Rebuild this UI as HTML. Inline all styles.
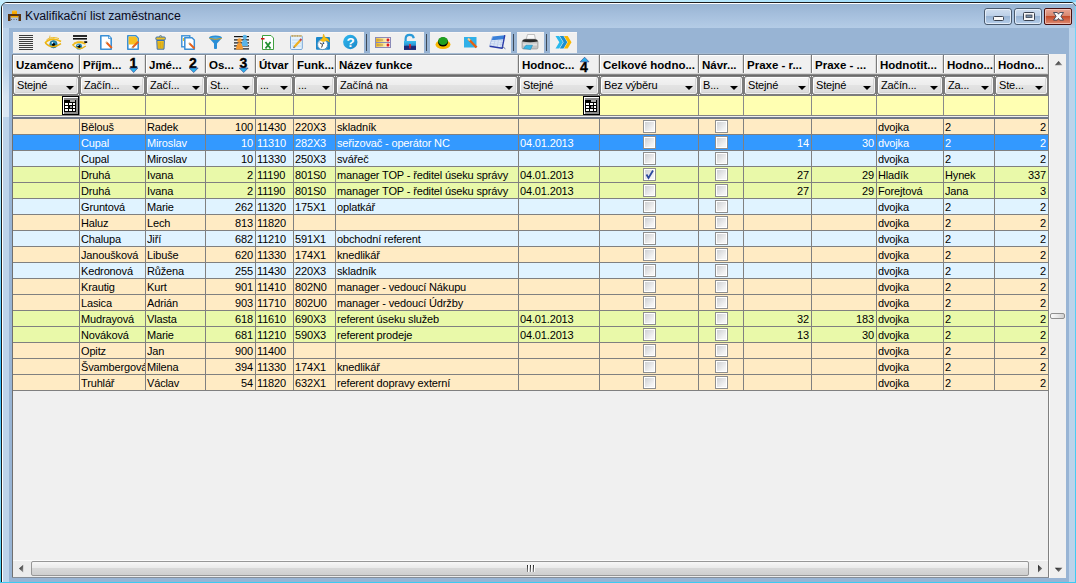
<!DOCTYPE html><html><head><meta charset="utf-8"><style>
*{margin:0;padding:0;box-sizing:border-box}
html,body{width:1076px;height:583px;overflow:hidden;background:linear-gradient(#c0eefe 0,#a0e4ff 35%,#30b8f8 65%,#90e0ff 85%,#3ccaf2 100%);font-family:"Liberation Sans",sans-serif}
.a{position:absolute}
.t{position:absolute;white-space:nowrap;font-size:11px;line-height:14px;color:#000;letter-spacing:-0.15px}
.hb{font-weight:bold;font-size:11.5px;top:58px;letter-spacing:0}
.r{text-align:right}
.cb{position:absolute;width:13px;height:13px;border:1px solid #8e8f8f;background:#fff;padding:1px}
.cb i{display:block;width:9px;height:9px;background:linear-gradient(135deg,#cfd1d4,#f4f4f4 80%)}
.fb{position:absolute;border:1px solid #fff;border-right-color:#f4f4f4;border-bottom-color:#f0f0f0;border-radius:2px;box-shadow:inset -1px -1px 0 #d4d4d4;background:linear-gradient(#f3f3f3 0,#ededed 45%,#e3e3e3 50%,#dcdcdc 100%)}
.arr{position:absolute;width:0;height:0;border-left:4px solid transparent;border-right:4px solid transparent;border-top:4px solid #000}
.vl{position:absolute;width:1px;background:#808080}
.hl{position:absolute;height:1px;background:#808080}
</style></head><body>
<div class="a" style="left:0;top:0;width:1076px;height:2px;background:linear-gradient(90deg,#c8ecfc,#c0ecfc 60%,#88d0f8)"></div>
<div class="a" style="left:1px;top:2px;width:1075px;height:581px;border:1px solid #1c1c1c;border-radius:6px 5px 0 0;background:#bcd3ea;overflow:hidden">
 <div class="a" style="left:0;top:0;width:100%;height:1px;background:#fff"></div>
 <div class="a" style="left:0;top:0;width:1px;height:100%;background:#fff"></div>
 <div class="a" style="left:1px;top:1px;width:100%;height:24px;background:linear-gradient(#98b4d2,#a4bedc 40%,#b4cce6 100%)"></div>
</div>
<div class="a" style="left:1075px;top:6px;width:1px;height:577px;background:linear-gradient(#70d4f8,#3ccaf2)"></div>
<div class="a" style="left:0;top:582px;width:1076px;height:1px;background:#3ccaf2"></div>

<div class="a" style="left:3px;top:66px;width:6px;height:51px;background:linear-gradient(rgba(255,255,255,0),rgba(255,255,255,0.4) 60%,rgba(255,255,255,0.45))"></div>
<div class="t" style="left:25px;top:8px;font-size:12.3px;line-height:16px;color:#0a0a20;letter-spacing:-0.05px">Kvalifikační list zaměstnance</div>
<div class="a" style="left:9px;top:28px;width:1060px;height:554px;background:#98b4d4"></div>
<div class="a" style="left:13px;top:32px;width:351px;height:21px;background:#f0f0f0;border-top:1px solid #f8f6f6"></div>
<div class="a" style="left:370px;top:32px;width:54px;height:21px;background:#f0f0f0;border-top:1px solid #f8f6f6"></div>
<div class="a" style="left:430px;top:32px;width:81px;height:21px;background:#f0f0f0;border-top:1px solid #f8f6f6"></div>
<div class="a" style="left:517px;top:32px;width:27px;height:21px;background:#f0f0f0;border-top:1px solid #f8f6f6"></div>
<div class="a" style="left:550px;top:32px;width:27px;height:21px;background:#f0f0f0;border-top:1px solid #f8f6f6"></div>
<div class="a" style="left:366px;top:34px;width:1px;height:17px;background:#3e4a58"></div>
<div class="a" style="left:426px;top:34px;width:1px;height:17px;background:#3e4a58"></div>
<div class="a" style="left:513px;top:34px;width:1px;height:17px;background:#3e4a58"></div>
<div class="a" style="left:546px;top:34px;width:1px;height:17px;background:#3e4a58"></div>

<svg class="a" style="left:0;top:0" width="1076" height="60" viewBox="0 0 1076 60">
<!-- title desk icon -->
<rect x="12" y="11" width="5" height="3" fill="#f5a800"/>
<rect x="12.5" y="10.5" width="4" height="1" fill="#ffc030"/>
<rect x="8" y="14" width="13" height="2" fill="#5a3410"/>
<rect x="8" y="16" width="2.5" height="5" fill="#5a3410"/>
<rect x="18.5" y="16" width="2.5" height="5" fill="#5a3410"/>
<rect x="11" y="16" width="7" height="1.5" fill="#f5a800"/>
<rect x="11" y="19" width="1" height="1" fill="#667"/><rect x="13.5" y="19" width="1" height="1" fill="#667"/><rect x="16" y="19" width="1" height="1" fill="#667"/>

<!-- 1 lines -->
<g fill="#3c3c3c"><rect x="19" y="35" width="14" height="1"/><rect x="19" y="37" width="14" height="1"/><rect x="19" y="39" width="14" height="1"/><rect x="19" y="41" width="14" height="1"/><rect x="19" y="43" width="14" height="1"/><rect x="19" y="45" width="14" height="1"/><rect x="19" y="47" width="14" height="1"/><rect x="19" y="49" width="14" height="1"/></g>

<!-- 2 eye -->
<circle cx="53.5" cy="44.2" r="3.7" fill="#2a8cb4"/><circle cx="53.5" cy="44.2" r="3.7" fill="none" stroke="#18607e" stroke-width="0.6"/>
<circle cx="53.6" cy="44.6" r="1.7" fill="#000"/><circle cx="52.4" cy="42.9" r="0.8" fill="#fff"/>
<path d="M45 43 Q51.5 36 61 41.5" fill="none" stroke="#f0b810" stroke-width="1.7"/>
<path d="M46.5 39.8 Q52 35.8 59 38.6" fill="none" stroke="#ecbc30" stroke-width="1"/>
<path d="M49.5 38.5 L50 35.5" stroke="#e0b030" stroke-width="0.8"/>
<path d="M45.3 43 Q52 50 61 43.6" fill="none" stroke="#e8b010" stroke-width="1.3"/>

<!-- 3 eye with lines -->
<rect x="73" y="35" width="14" height="2" fill="#2a2a2a"/><rect x="73" y="38" width="14" height="1.6" fill="#111"/>
<rect x="84.2" y="41.2" width="3" height="1.8" fill="#111"/>
<circle cx="79" cy="46.5" r="3.1" fill="#2a8cb4"/><circle cx="79" cy="46.6" r="1.5" fill="#000"/><circle cx="78" cy="45.4" r="0.7" fill="#fff"/>
<path d="M72.5 45 Q78 40 85.5 44" fill="none" stroke="#f0b810" stroke-width="1.5"/>
<path d="M73.8 43 Q78.5 40 84 42" fill="none" stroke="#ecbc30" stroke-width="0.9"/>
<path d="M72.7 45.2 Q79 51.5 85.8 46" fill="none" stroke="#e8b010" stroke-width="1.2"/>

<!-- 4 doc -->
<path d="M100.8 35.8 H108.8 L111.2 38.2 V49.2 H100.8Z" fill="#fff" stroke="#3a8fd6" stroke-width="1.6" stroke-linejoin="round"/>
<path d="M108.5 35.8 V38.5 H111.2" fill="#d8ecfa" stroke="#3a8fd6" stroke-width="0.8"/>
<path d="M106.5 42.5 L111.8 48" stroke="#e8601a" stroke-width="2"/>
<path d="M105.8 41.8 L107 43" stroke="#d8b080" stroke-width="1.6"/>

<!-- 5 doc yellow -->
<path d="M127.8 35.8 H135.8 L138.2 38.2 V49.2 H127.8Z" fill="#fff" stroke="#3a8fd6" stroke-width="1.6" stroke-linejoin="round"/>
<path d="M128.6 36.6 H135.5 L137.4 38.6 V44.5 H128.6Z" fill="#f8c020"/>
<path d="M132.5 47.5 L138.4 41.6" stroke="#e8601a" stroke-width="2"/>
<path d="M131.8 48.2 L133 47" stroke="#c8a070" stroke-width="1.4"/>

<!-- 6 trash -->
<rect x="155.8" y="37" width="9.6" height="3" rx="1.2" fill="#f0c020" stroke="#3a70b0" stroke-width="1"/>
<path d="M159 36.6 Q160.6 34.6 162.2 36.6" fill="#f0c020" stroke="#3a70b0" stroke-width="0.9"/>
<path d="M156.8 40.5 H164.4 L164 49.2 H157.2Z" fill="#f0c020" stroke="#3a70b0" stroke-width="1"/>
<path d="M159 42 V48 M160.6 42 V48 M162.2 42 V48" stroke="#c89a10" stroke-width="0.6"/>

<!-- 7 doc copy -->
<rect x="181.8" y="35.8" width="8" height="11" fill="#fff" stroke="#3a8fd6" stroke-width="1.4"/>
<rect x="183" y="38" width="1" height="3" fill="#f0c020"/>
<path d="M184.8 37.8 H192 L194.3 40 V49.2 H184.8Z" fill="#fff" stroke="#3a8fd6" stroke-width="1.5" stroke-linejoin="round"/>
<path d="M189.5 43.5 L194.5 48.5" stroke="#e8601a" stroke-width="2"/>
<path d="M188.8 42.8 L190 44" stroke="#c8a070" stroke-width="1.4"/>

<!-- 8 funnel -->
<path d="M209 38 Q209 35.5 215.5 35.5 Q222 35.5 222 38 L217 43.5 V48.5 Q215.5 49.5 214 48.5 V43.5Z" fill="#2a8ed6"/>
<path d="M210.5 38 Q215.5 36.6 220.5 38 Q215.5 39.4 210.5 38Z" fill="#5ab8ec"/>
<path d="M209.4 38.4 Q215.5 40.4 221.6 38.4" stroke="#d8a020" stroke-width="1" fill="none"/>

<!-- 9 people lines -->
<g fill="#111"><rect x="234" y="36" width="15" height="1.2"/><rect x="234" y="39.3" width="15" height="1.2"/><rect x="234" y="42.3" width="15" height="1.2"/><rect x="234" y="45.3" width="15" height="1.2"/><rect x="234" y="48.3" width="15" height="1.2"/></g>
<circle cx="244.8" cy="37" r="2.2" fill="#5ab4e8"/><path d="M241.5 46 Q242 39.5 244.8 39 Q247.6 39.5 248 46Z" fill="#5ab4e8"/>
<circle cx="239.5" cy="40.5" r="2.2" fill="#f59a30"/><path d="M236 49.5 Q236.5 43 239.5 42.5 Q242.5 43 243 49.5Z" fill="#f59a30"/>

<!-- 10 excel -->
<path d="M262.5 35.5 H271 L273.5 38 V49.5 H262.5Z" fill="#fff" stroke="#40a040" stroke-width="1"/>
<rect x="261" y="38" width="3.5" height="1.5" fill="#d01010"/>
<path d="M265.5 42 L270.5 48.5 M270.5 42 L265.5 48.5" stroke="#209030" stroke-width="1.8"/>

<!-- 11 notepad -->
<rect x="290.5" y="35.5" width="11.8" height="14" rx="1.2" fill="#e4f2fc" stroke="#7aa8d8"/>
<rect x="291" y="35" width="11" height="1.8" fill="#d0c090"/>
<path d="M292.5 35.5 V36.5 M295 35.5 V36.5 M297.5 35.5 V36.5 M300 35.5 V36.5" stroke="#a07840" stroke-width="0.8"/>
<path d="M292 40 H301 M292 43 H301 M292 46 H301" stroke="#b8d4f0" stroke-width="0.8"/>
<path d="M294.2 47 L300.2 40.4" stroke="#f0b020" stroke-width="2.2"/>
<path d="M300 40.6 L301.4 39" stroke="#c04040" stroke-width="2"/>
<path d="M293.6 47.8 L294.4 46.8" stroke="#555" stroke-width="1.2"/>

<!-- 12 clock -->
<rect x="316" y="37" width="14" height="12.8" rx="1" fill="#1a88cc"/>
<circle cx="322.6" cy="44.4" r="5.3" fill="#fff"/>
<circle cx="322.6" cy="44.6" r="5" fill="none" stroke="#0a5a90" stroke-width="0.6"/>
<path d="M322.6 44.6 L319.8 42.8 M322.6 44.6 L321.6 47.5" stroke="#222" stroke-width="0.9"/><circle cx="323.4" cy="43.2" r="0.9" fill="#1a4a80"/>
<path d="M323.5 34 L325.2 37.4 Q328.5 38 329.6 42 L326.4 40.4 L323.4 41.8 L320.2 40.6 Q321.5 38.6 322.6 38Z" fill="#f8c010" stroke="#d8a000" stroke-width="0.4" stroke-linejoin="round"/>

<!-- 13 help -->
<defs><linearGradient id="hg" x1="0" y1="0" x2="1" y2="1"><stop offset="0" stop-color="#30b8f0"/><stop offset="1" stop-color="#1a88c8"/></linearGradient>
<linearGradient id="lg" x1="0" y1="0" x2="1" y2="0"><stop offset="0" stop-color="#e8b020"/><stop offset="0.6" stop-color="#f8e8a0"/><stop offset="1" stop-color="#ffffff"/></linearGradient>
<linearGradient id="kg" x1="0" y1="0" x2="0" y2="1"><stop offset="0" stop-color="#38c0f0"/><stop offset="0.5" stop-color="#2a90d0"/><stop offset="0.55" stop-color="#22307a"/><stop offset="1" stop-color="#1a2a78"/></linearGradient></defs>
<circle cx="350.3" cy="42" r="7.2" fill="url(#hg)"/>
<text x="350.5" y="47.2" font-family="Liberation Sans" font-weight="bold" font-size="13.5" fill="#fff" text-anchor="middle">?</text>

<!-- 14 list x -->
<rect x="375.5" y="37.5" width="15" height="10" fill="#f0f0f8" stroke="#8a8ab8" stroke-width="1"/>
<rect x="376" y="38.2" width="14" height="3.8" fill="url(#lg)"/><rect x="376" y="43" width="14" height="3.8" fill="url(#lg)"/>
<path d="M375.5 42.5 H390.5" stroke="#8a8ab8"/>
<path d="M377 40 H383 M377 45 H383" stroke="#a08030" stroke-width="0.7"/>
<path d="M386.8 38.8 L389.2 41.2 M389.2 38.8 L386.8 41.2 M386.8 43.8 L389.2 46.2 M389.2 43.8 L386.8 46.2" stroke="#e01818" stroke-width="1.3"/>

<!-- 15 lock -->
<path d="M405.6 41.5 V39 Q405.6 34.8 409.6 34.8 Q413.2 34.8 413.8 38.2" fill="none" stroke="#2a9ad8" stroke-width="2.2"/>
<path d="M404 41 H416 V49.8 H404Z" fill="url(#kg)"/>
<path d="M404 46.5 Q407 45 410 46.5 Q413 48 416 46.5 V49.8 H404Z" fill="#1a2a78"/>
<circle cx="410" cy="45" r="1.1" fill="#e02020"/><rect x="409.3" y="45" width="1.4" height="3.5" fill="#e02020"/>

<!-- 16 green button -->
<ellipse cx="443" cy="44.5" rx="7.5" ry="4.5" fill="#f8b800"/>
<ellipse cx="443" cy="42" rx="5" ry="4.5" fill="#000"/>
<ellipse cx="443" cy="41" rx="4.8" ry="4" fill="#20a020"/>

<!-- 17 pencil blue -->
<rect x="464" y="37" width="12.5" height="10.5" fill="#30b0e8"/>
<path d="M469 39.5 L476.5 47.5" stroke="#e86010" stroke-width="2.5"/>
<path d="M468 38.5 L470 40.5" stroke="#f8d090" stroke-width="2"/>

<!-- 18 calendar tilted -->
<path d="M492.5 36.5 L504.8 35.2 L502.2 48.2 L489.6 46.2 Z" fill="#e6eefa"/>
<path d="M492.5 36.5 L504.8 35.2 L504 39.2 L491.4 40.2Z" fill="#3a80d8"/>
<path d="M491 41.5 L503.6 40.5 M490.5 43.5 L503.2 42.6 M490 45.2 L502.8 44.6 M495 40 L493.5 46.8 M498.5 39.8 L497.2 47.4 M501.5 39.4 L500.5 47.8" stroke="#b0c4e8" stroke-width="0.6"/>
<path d="M504.8 35.2 L502.2 48.2 L489.6 46.2" fill="none" stroke="#2a3aa8" stroke-width="1.4" stroke-linejoin="round"/>
<path d="M492.5 36.5 L489.6 46.2" stroke="#9ab0e0" stroke-width="0.8"/>
<path d="M502.6 46.5 L505.4 48.8" stroke="#6070a0" stroke-width="1"/>

<!-- 19 printer -->
<path d="M526 40 L527.5 34.5 H534.5 L535.5 40Z" fill="#fafafa" stroke="#a8a8a8" stroke-width="0.7"/>
<path d="M522 42 Q522 39.5 525 39.2 H535 Q538 39.5 538 42 V47.5 Q538 49 536.5 49 H523.5 Q522 49 522 47.5Z" fill="#c4c4c4" stroke="#8a8a8a" stroke-width="0.6"/>
<path d="M522.2 41.5 Q522.5 39.4 525 39.2 H535 Q537.6 39.4 537.8 41.5 Q530 43 522.2 41.5Z" fill="#2a2a2a"/>
<rect x="523" y="43.5" width="14" height="2" fill="#e0e0e0"/>
<path d="M523.5 48.5 L526 45.2 L532.5 45.2 L530.5 49.6 Z" fill="#38b8e8" stroke="#1a80b0" stroke-width="0.5"/>

<!-- 20 arrows -->
<path d="M555.5 36 H559.2 L563 42.2 L559.2 48.5 H555.5 L559.3 42.2Z" fill="#28b8ec"/>
<path d="M559.8 36 H563.5 L567.3 42.2 L563.5 48.5 H559.8 L563.6 42.2Z" fill="#1a8ed0"/>
<path d="M564 36 H567.7 L571.5 42.2 L567.7 48.5 H564 L567.8 42.2Z" fill="#f8b800"/>

<!-- window buttons -->
<defs>
<linearGradient id="gb" x1="0" y1="0" x2="0" y2="1"><stop offset="0" stop-color="#d2e0f0"/><stop offset="0.45" stop-color="#bcd0e8"/><stop offset="0.5" stop-color="#98b4d4"/><stop offset="1" stop-color="#b8d0ec"/></linearGradient>
<linearGradient id="gr" x1="0" y1="0" x2="0" y2="1"><stop offset="0" stop-color="#eaa898"/><stop offset="0.45" stop-color="#d88870"/><stop offset="0.5" stop-color="#c44a28"/><stop offset="1" stop-color="#e0907a"/></linearGradient>
</defs>
<rect x="984.5" y="8.5" width="27" height="16" rx="2.5" fill="url(#gb)" stroke="#4a5a6e"/>
<rect x="985.5" y="9.5" width="25" height="14" rx="2" fill="none" stroke="#eef4fb" stroke-opacity="0.8"/>
<rect x="993.5" y="16.5" width="10" height="4" rx="1" fill="#f8f8f8" stroke="#3a4250" stroke-width="1"/>
<rect x="1014.5" y="8.5" width="27" height="16" rx="2.5" fill="url(#gb)" stroke="#4a5a6e"/>
<rect x="1015.5" y="9.5" width="25" height="14" rx="2" fill="none" stroke="#eef4fb" stroke-opacity="0.8"/>
<rect x="1023.5" y="12.5" width="11" height="8" rx="1" fill="#f8f8f8" stroke="#3a4250" stroke-width="1"/>
<rect x="1026" y="15" width="6" height="2.5" fill="#7a90a8" stroke="#3a4250" stroke-width="0.8"/>
<rect x="1044.5" y="8.5" width="27" height="16" rx="1.5" fill="url(#gr)" stroke="#4a1010"/>
<rect x="1045.5" y="9.5" width="25" height="14" rx="1" fill="none" stroke="#f8d0c8" stroke-opacity="0.7"/>
<path d="M1053.5 12.5 L1057.3 12.5 L1058.5 14.2 L1059.7 12.5 L1063.5 12.5 L1060.9 16.3 L1063.5 20.1 L1059.7 20.1 L1058.5 18.4 L1057.3 20.1 L1053.5 20.1 L1056.1 16.3Z" fill="#f8f8f8" stroke="#3a4252" stroke-width="0.9" stroke-linejoin="round"/>
</svg>

<div class="hl" style="left:12px;top:53px;width:1037px;background:#a6bcd4"></div>
<div class="hl" style="left:12px;top:54px;width:1037px;background:#7e8c9c"></div>
<div class="a" style="left:12px;top:55px;width:1037px;height:523px;background:#f0f0f0;border-left:1px solid #707070;border-right:1px solid #808080;border-bottom:1px solid #808a94"></div>
<div class="a" style="left:13px;top:55px;width:66px;height:19px;background:#f0f0f0;border-top:1px solid #fff;border-left:1px solid #fff;border-right:1px solid #dadada"></div>
<div class="vl" style="left:79px;top:55px;height:21px;background:#7a7a7a"></div>
<div class="t hb" style="left:16px;width:62px;overflow:hidden">Uzamčeno</div>
<div class="a" style="left:80px;top:55px;width:65px;height:19px;background:#f0f0f0;border-top:1px solid #fff;border-left:1px solid #fff;border-right:1px solid #dadada"></div>
<div class="vl" style="left:145px;top:55px;height:21px;background:#7a7a7a"></div>
<div class="t hb" style="left:83px;width:61px;overflow:hidden">Příjm...</div>
<div class="a" style="left:146px;top:55px;width:59px;height:19px;background:#f0f0f0;border-top:1px solid #fff;border-left:1px solid #fff;border-right:1px solid #dadada"></div>
<div class="vl" style="left:205px;top:55px;height:21px;background:#7a7a7a"></div>
<div class="t hb" style="left:149px;width:55px;overflow:hidden">Jmé...</div>
<div class="a" style="left:206px;top:55px;width:49px;height:19px;background:#f0f0f0;border-top:1px solid #fff;border-left:1px solid #fff;border-right:1px solid #dadada"></div>
<div class="vl" style="left:255px;top:55px;height:21px;background:#7a7a7a"></div>
<div class="t hb" style="left:209px;width:45px;overflow:hidden">Os...</div>
<div class="a" style="left:256px;top:55px;width:37px;height:19px;background:#f0f0f0;border-top:1px solid #fff;border-left:1px solid #fff;border-right:1px solid #dadada"></div>
<div class="vl" style="left:293px;top:55px;height:21px;background:#7a7a7a"></div>
<div class="t hb" style="left:259px;width:33px;overflow:hidden">Útvar</div>
<div class="a" style="left:294px;top:55px;width:41px;height:19px;background:#f0f0f0;border-top:1px solid #fff;border-left:1px solid #fff;border-right:1px solid #dadada"></div>
<div class="vl" style="left:335px;top:55px;height:21px;background:#7a7a7a"></div>
<div class="t hb" style="left:297px;width:37px;overflow:hidden">Funk...</div>
<div class="a" style="left:336px;top:55px;width:182px;height:19px;background:#f0f0f0;border-top:1px solid #fff;border-left:1px solid #fff;border-right:1px solid #dadada"></div>
<div class="vl" style="left:518px;top:55px;height:21px;background:#7a7a7a"></div>
<div class="t hb" style="left:339px;width:178px;overflow:hidden">Název funkce</div>
<div class="a" style="left:519px;top:55px;width:80px;height:19px;background:#f0f0f0;border-top:1px solid #fff;border-left:1px solid #fff;border-right:1px solid #dadada"></div>
<div class="vl" style="left:599px;top:55px;height:21px;background:#7a7a7a"></div>
<div class="t hb" style="left:522px;width:76px;overflow:hidden">Hodnoc...</div>
<div class="a" style="left:600px;top:55px;width:98px;height:19px;background:#f0f0f0;border-top:1px solid #fff;border-left:1px solid #fff;border-right:1px solid #dadada"></div>
<div class="vl" style="left:698px;top:55px;height:21px;background:#7a7a7a"></div>
<div class="t hb" style="left:603px;width:94px;overflow:hidden">Celkové hodno...</div>
<div class="a" style="left:699px;top:55px;width:44px;height:19px;background:#f0f0f0;border-top:1px solid #fff;border-left:1px solid #fff;border-right:1px solid #dadada"></div>
<div class="vl" style="left:743px;top:55px;height:21px;background:#7a7a7a"></div>
<div class="t hb" style="left:702px;width:40px;overflow:hidden">Návr...</div>
<div class="a" style="left:744px;top:55px;width:67px;height:19px;background:#f0f0f0;border-top:1px solid #fff;border-left:1px solid #fff;border-right:1px solid #dadada"></div>
<div class="vl" style="left:811px;top:55px;height:21px;background:#7a7a7a"></div>
<div class="t hb" style="left:747px;width:63px;overflow:hidden">Praxe - r...</div>
<div class="a" style="left:812px;top:55px;width:64px;height:19px;background:#f0f0f0;border-top:1px solid #fff;border-left:1px solid #fff;border-right:1px solid #dadada"></div>
<div class="vl" style="left:876px;top:55px;height:21px;background:#7a7a7a"></div>
<div class="t hb" style="left:815px;width:60px;overflow:hidden">Praxe - ...</div>
<div class="a" style="left:877px;top:55px;width:66px;height:19px;background:#f0f0f0;border-top:1px solid #fff;border-left:1px solid #fff;border-right:1px solid #dadada"></div>
<div class="vl" style="left:943px;top:55px;height:21px;background:#7a7a7a"></div>
<div class="t hb" style="left:880px;width:62px;overflow:hidden">Hodnotit...</div>
<div class="a" style="left:944px;top:55px;width:50px;height:19px;background:#f0f0f0;border-top:1px solid #fff;border-left:1px solid #fff;border-right:1px solid #dadada"></div>
<div class="vl" style="left:994px;top:55px;height:21px;background:#7a7a7a"></div>
<div class="t hb" style="left:947px;width:46px;overflow:hidden">Hodno...</div>
<div class="a" style="left:995px;top:55px;width:53px;height:19px;background:#f0f0f0;border-top:1px solid #fff;border-left:1px solid #fff;border-right:1px solid #dadada"></div>
<div class="vl" style="left:1048px;top:55px;height:21px;background:#7a7a7a"></div>
<div class="t hb" style="left:998px;width:49px;overflow:hidden">Hodno...</div>
<div class="hl" style="left:13px;top:73px;width:1035px;background:#d8d8d8"></div>
<div class="hl" style="left:13px;top:74px;width:1035px;background:#8a8a8a"></div>
<div class="hl" style="left:13px;top:75px;width:1035px;background:#6c6c6c"></div>
<svg class="a" style="left:0;top:0" width="1076" height="80">
<g font-family="Liberation Sans" font-weight="bold" font-size="14" fill="#000" stroke="#000" stroke-width="0.35">
<text x="129.5" y="67.5">1</text><text x="189" y="67.5">2</text><text x="239.5" y="67.5">3</text><text x="580" y="71.5">4</text></g>
<g fill="#2ab0ec" stroke="#2a3a8a" stroke-width="0.6" stroke-linejoin="round">
<path d="M129.5 68 H137.8 L133.65 72.6Z"/><path d="M189.2 68 H198.2 L193.7 72.6Z"/><path d="M239.2 68 H248.2 L243.7 72.6Z"/>
<path d="M580.2 61.8 H589 L584.6 57.2Z"/></g></svg>
<div class="a" style="left:13px;top:76px;width:1035px;height:20px;background:#7c7c7c"></div>
<div class="fb" style="left:14px;top:77px;width:64px;height:17px"></div>
<div class="t" style="left:17px;top:78px">Stejné</div>
<div class="arr" style="left:66px;top:86px"></div>
<div class="fb" style="left:81px;top:77px;width:63px;height:17px"></div>
<div class="t" style="left:84px;top:78px">Začín...</div>
<div class="arr" style="left:132px;top:86px"></div>
<div class="fb" style="left:147px;top:77px;width:57px;height:17px"></div>
<div class="t" style="left:150px;top:78px">Začí...</div>
<div class="arr" style="left:192px;top:86px"></div>
<div class="fb" style="left:207px;top:77px;width:47px;height:17px"></div>
<div class="t" style="left:210px;top:78px">St...</div>
<div class="arr" style="left:242px;top:86px"></div>
<div class="fb" style="left:257px;top:77px;width:35px;height:17px"></div>
<div class="t" style="left:260px;top:78px">...</div>
<div class="arr" style="left:280px;top:86px"></div>
<div class="fb" style="left:295px;top:77px;width:39px;height:17px"></div>
<div class="t" style="left:298px;top:78px">...</div>
<div class="arr" style="left:322px;top:86px"></div>
<div class="fb" style="left:337px;top:77px;width:180px;height:17px"></div>
<div class="t" style="left:340px;top:78px">Začíná na</div>
<div class="arr" style="left:505px;top:86px"></div>
<div class="fb" style="left:520px;top:77px;width:78px;height:17px"></div>
<div class="t" style="left:523px;top:78px">Stejné</div>
<div class="arr" style="left:586px;top:86px"></div>
<div class="fb" style="left:601px;top:77px;width:96px;height:17px"></div>
<div class="t" style="left:604px;top:78px">Bez výběru</div>
<div class="arr" style="left:685px;top:86px"></div>
<div class="fb" style="left:700px;top:77px;width:42px;height:17px"></div>
<div class="t" style="left:703px;top:78px">B...</div>
<div class="arr" style="left:730px;top:86px"></div>
<div class="fb" style="left:745px;top:77px;width:65px;height:17px"></div>
<div class="t" style="left:748px;top:78px">Stejné</div>
<div class="arr" style="left:798px;top:86px"></div>
<div class="fb" style="left:813px;top:77px;width:62px;height:17px"></div>
<div class="t" style="left:816px;top:78px">Stejné</div>
<div class="arr" style="left:863px;top:86px"></div>
<div class="fb" style="left:878px;top:77px;width:64px;height:17px"></div>
<div class="t" style="left:881px;top:78px">Začín...</div>
<div class="arr" style="left:930px;top:86px"></div>
<div class="fb" style="left:945px;top:77px;width:48px;height:17px"></div>
<div class="t" style="left:948px;top:78px">Za...</div>
<div class="arr" style="left:981px;top:86px"></div>
<div class="fb" style="left:996px;top:77px;width:51px;height:17px"></div>
<div class="t" style="left:999px;top:78px">Ste...</div>
<div class="arr" style="left:1035px;top:86px"></div>
<div class="a" style="left:13px;top:76px;width:1px;height:1px;background:#e8e8e8"></div>
<div class="a" style="left:13px;top:94px;width:1px;height:1px;background:#e8e8e8"></div>
<div class="a" style="left:78px;top:76px;width:1px;height:1px;background:#e8e8e8"></div>
<div class="a" style="left:78px;top:94px;width:1px;height:1px;background:#e8e8e8"></div>
<div class="a" style="left:80px;top:76px;width:1px;height:1px;background:#e8e8e8"></div>
<div class="a" style="left:80px;top:94px;width:1px;height:1px;background:#e8e8e8"></div>
<div class="a" style="left:144px;top:76px;width:1px;height:1px;background:#e8e8e8"></div>
<div class="a" style="left:144px;top:94px;width:1px;height:1px;background:#e8e8e8"></div>
<div class="a" style="left:146px;top:76px;width:1px;height:1px;background:#e8e8e8"></div>
<div class="a" style="left:146px;top:94px;width:1px;height:1px;background:#e8e8e8"></div>
<div class="a" style="left:204px;top:76px;width:1px;height:1px;background:#e8e8e8"></div>
<div class="a" style="left:204px;top:94px;width:1px;height:1px;background:#e8e8e8"></div>
<div class="a" style="left:206px;top:76px;width:1px;height:1px;background:#e8e8e8"></div>
<div class="a" style="left:206px;top:94px;width:1px;height:1px;background:#e8e8e8"></div>
<div class="a" style="left:254px;top:76px;width:1px;height:1px;background:#e8e8e8"></div>
<div class="a" style="left:254px;top:94px;width:1px;height:1px;background:#e8e8e8"></div>
<div class="a" style="left:256px;top:76px;width:1px;height:1px;background:#e8e8e8"></div>
<div class="a" style="left:256px;top:94px;width:1px;height:1px;background:#e8e8e8"></div>
<div class="a" style="left:292px;top:76px;width:1px;height:1px;background:#e8e8e8"></div>
<div class="a" style="left:292px;top:94px;width:1px;height:1px;background:#e8e8e8"></div>
<div class="a" style="left:294px;top:76px;width:1px;height:1px;background:#e8e8e8"></div>
<div class="a" style="left:294px;top:94px;width:1px;height:1px;background:#e8e8e8"></div>
<div class="a" style="left:334px;top:76px;width:1px;height:1px;background:#e8e8e8"></div>
<div class="a" style="left:334px;top:94px;width:1px;height:1px;background:#e8e8e8"></div>
<div class="a" style="left:336px;top:76px;width:1px;height:1px;background:#e8e8e8"></div>
<div class="a" style="left:336px;top:94px;width:1px;height:1px;background:#e8e8e8"></div>
<div class="a" style="left:517px;top:76px;width:1px;height:1px;background:#e8e8e8"></div>
<div class="a" style="left:517px;top:94px;width:1px;height:1px;background:#e8e8e8"></div>
<div class="a" style="left:519px;top:76px;width:1px;height:1px;background:#e8e8e8"></div>
<div class="a" style="left:519px;top:94px;width:1px;height:1px;background:#e8e8e8"></div>
<div class="a" style="left:598px;top:76px;width:1px;height:1px;background:#e8e8e8"></div>
<div class="a" style="left:598px;top:94px;width:1px;height:1px;background:#e8e8e8"></div>
<div class="a" style="left:600px;top:76px;width:1px;height:1px;background:#e8e8e8"></div>
<div class="a" style="left:600px;top:94px;width:1px;height:1px;background:#e8e8e8"></div>
<div class="a" style="left:697px;top:76px;width:1px;height:1px;background:#e8e8e8"></div>
<div class="a" style="left:697px;top:94px;width:1px;height:1px;background:#e8e8e8"></div>
<div class="a" style="left:699px;top:76px;width:1px;height:1px;background:#e8e8e8"></div>
<div class="a" style="left:699px;top:94px;width:1px;height:1px;background:#e8e8e8"></div>
<div class="a" style="left:742px;top:76px;width:1px;height:1px;background:#e8e8e8"></div>
<div class="a" style="left:742px;top:94px;width:1px;height:1px;background:#e8e8e8"></div>
<div class="a" style="left:744px;top:76px;width:1px;height:1px;background:#e8e8e8"></div>
<div class="a" style="left:744px;top:94px;width:1px;height:1px;background:#e8e8e8"></div>
<div class="a" style="left:810px;top:76px;width:1px;height:1px;background:#e8e8e8"></div>
<div class="a" style="left:810px;top:94px;width:1px;height:1px;background:#e8e8e8"></div>
<div class="a" style="left:812px;top:76px;width:1px;height:1px;background:#e8e8e8"></div>
<div class="a" style="left:812px;top:94px;width:1px;height:1px;background:#e8e8e8"></div>
<div class="a" style="left:875px;top:76px;width:1px;height:1px;background:#e8e8e8"></div>
<div class="a" style="left:875px;top:94px;width:1px;height:1px;background:#e8e8e8"></div>
<div class="a" style="left:877px;top:76px;width:1px;height:1px;background:#e8e8e8"></div>
<div class="a" style="left:877px;top:94px;width:1px;height:1px;background:#e8e8e8"></div>
<div class="a" style="left:942px;top:76px;width:1px;height:1px;background:#e8e8e8"></div>
<div class="a" style="left:942px;top:94px;width:1px;height:1px;background:#e8e8e8"></div>
<div class="a" style="left:944px;top:76px;width:1px;height:1px;background:#e8e8e8"></div>
<div class="a" style="left:944px;top:94px;width:1px;height:1px;background:#e8e8e8"></div>
<div class="a" style="left:993px;top:76px;width:1px;height:1px;background:#e8e8e8"></div>
<div class="a" style="left:993px;top:94px;width:1px;height:1px;background:#e8e8e8"></div>
<div class="a" style="left:995px;top:76px;width:1px;height:1px;background:#e8e8e8"></div>
<div class="a" style="left:995px;top:94px;width:1px;height:1px;background:#e8e8e8"></div>
<div class="a" style="left:13px;top:96px;width:1035px;height:19px;background:#ffffb2"></div>
<div class="vl" style="left:79px;top:96px;height:19px;background:#8a8a8a"></div>
<div class="vl" style="left:145px;top:96px;height:19px;background:#8a8a8a"></div>
<div class="vl" style="left:205px;top:96px;height:19px;background:#8a8a8a"></div>
<div class="vl" style="left:255px;top:96px;height:19px;background:#8a8a8a"></div>
<div class="vl" style="left:293px;top:96px;height:19px;background:#8a8a8a"></div>
<div class="vl" style="left:335px;top:96px;height:19px;background:#8a8a8a"></div>
<div class="vl" style="left:518px;top:96px;height:19px;background:#8a8a8a"></div>
<div class="vl" style="left:599px;top:96px;height:19px;background:#8a8a8a"></div>
<div class="vl" style="left:698px;top:96px;height:19px;background:#8a8a8a"></div>
<div class="vl" style="left:743px;top:96px;height:19px;background:#8a8a8a"></div>
<div class="vl" style="left:811px;top:96px;height:19px;background:#8a8a8a"></div>
<div class="vl" style="left:876px;top:96px;height:19px;background:#8a8a8a"></div>
<div class="vl" style="left:943px;top:96px;height:19px;background:#8a8a8a"></div>
<div class="vl" style="left:994px;top:96px;height:19px;background:#8a8a8a"></div>
<div class="hl" style="left:13px;top:115px;width:1035px;background:#858585"></div>
<div class="hl" style="left:13px;top:116px;width:1035px;background:#efefef"></div>
<div class="a" style="left:13px;top:117px;width:1035px;height:2px;background:#6f7888"></div>
<div class="a" style="left:62px;top:96px;width:17px;height:19px;background:#000">
<div class="a" style="left:1px;top:1px;width:15px;height:17px;background:#8c8c8c;border-top:1px solid #fff;border-left:1px solid #fff"></div>
<div class="a" style="left:2px;top:4px;width:12px;height:12px;background:#000"></div>
<div class="a" style="left:3px;top:4px;width:5px;height:2px;background:#000"></div>
<div class="a" style="left:8px;top:4px;width:5px;height:2px;background:#aaa"></div>
<div class="a" style="left:3px;top:7px;width:3px;height:2px;background:#fff"></div><div class="a" style="left:7px;top:7px;width:3px;height:2px;background:#fff"></div><div class="a" style="left:11px;top:7px;width:2px;height:2px;background:#fff"></div>
<div class="a" style="left:3px;top:10px;width:3px;height:2px;background:#fff"></div><div class="a" style="left:8px;top:10px;width:2px;height:2px;background:#999"></div><div class="a" style="left:11px;top:10px;width:2px;height:2px;background:#fff"></div>
<div class="a" style="left:3px;top:13px;width:3px;height:2px;background:#fff"></div><div class="a" style="left:7px;top:13px;width:3px;height:2px;background:#fff"></div><div class="a" style="left:11px;top:13px;width:2px;height:2px;background:#fff"></div>
</div>
<div class="a" style="left:583px;top:96px;width:17px;height:19px;background:#000">
<div class="a" style="left:1px;top:1px;width:15px;height:17px;background:#8c8c8c;border-top:1px solid #fff;border-left:1px solid #fff"></div>
<div class="a" style="left:2px;top:4px;width:12px;height:12px;background:#000"></div>
<div class="a" style="left:3px;top:4px;width:5px;height:2px;background:#000"></div>
<div class="a" style="left:8px;top:4px;width:5px;height:2px;background:#aaa"></div>
<div class="a" style="left:3px;top:7px;width:3px;height:2px;background:#fff"></div><div class="a" style="left:7px;top:7px;width:3px;height:2px;background:#fff"></div><div class="a" style="left:11px;top:7px;width:2px;height:2px;background:#fff"></div>
<div class="a" style="left:3px;top:10px;width:3px;height:2px;background:#fff"></div><div class="a" style="left:8px;top:10px;width:2px;height:2px;background:#999"></div><div class="a" style="left:11px;top:10px;width:2px;height:2px;background:#fff"></div>
<div class="a" style="left:3px;top:13px;width:3px;height:2px;background:#fff"></div><div class="a" style="left:7px;top:13px;width:3px;height:2px;background:#fff"></div><div class="a" style="left:11px;top:13px;width:2px;height:2px;background:#fff"></div>
</div>
<div class="a" style="left:13px;top:119px;width:1035px;height:15px;background:#ffebc4"></div>
<div class="hl" style="left:13px;top:134px;width:1035px"></div>
<div class="t" style="left:81px;top:120px;color:#000;width:64px;overflow:hidden">Bělouš</div>
<div class="t" style="left:147px;top:120px;color:#000;width:58px;overflow:hidden">Radek</div>
<div class="t r" style="left:205px;width:48px;top:120px;color:#000">100</div>
<div class="t" style="left:257px;top:120px;color:#000;width:36px;overflow:hidden">11430</div>
<div class="t" style="left:295px;top:120px;color:#000;width:40px;overflow:hidden">220X3</div>
<div class="t" style="left:337px;top:120px;color:#000;width:181px;overflow:hidden">skladník</div>
<div class="cb" style="left:643px;top:120px"><i></i></div>
<div class="cb" style="left:715px;top:120px"><i></i></div>
<div class="t" style="left:878px;top:120px;color:#000;width:65px;overflow:hidden">dvojka</div>
<div class="t" style="left:945px;top:120px;color:#000;width:49px;overflow:hidden">2</div>
<div class="t r" style="left:994px;width:52px;top:120px;color:#000">2</div>
<div class="a" style="left:13px;top:135px;width:1035px;height:15px;background:#3399ff"></div>
<div class="hl" style="left:13px;top:150px;width:1035px"></div>
<div class="t" style="left:81px;top:136px;color:#fff;width:64px;overflow:hidden">Cupal</div>
<div class="t" style="left:147px;top:136px;color:#fff;width:58px;overflow:hidden">Miroslav</div>
<div class="t r" style="left:205px;width:48px;top:136px;color:#fff">10</div>
<div class="t" style="left:257px;top:136px;color:#fff;width:36px;overflow:hidden">11310</div>
<div class="t" style="left:295px;top:136px;color:#fff;width:40px;overflow:hidden">282X3</div>
<div class="t" style="left:337px;top:136px;color:#fff;width:181px;overflow:hidden">seřizovač - operátor NC</div>
<div class="t" style="left:520px;top:136px;color:#fff;width:79px;overflow:hidden">04.01.2013</div>
<div class="cb" style="left:643px;top:136px"><i></i></div>
<div class="cb" style="left:715px;top:136px"><i></i></div>
<div class="t r" style="left:743px;width:66px;top:136px;color:#fff">14</div>
<div class="t r" style="left:811px;width:63px;top:136px;color:#fff">30</div>
<div class="t" style="left:878px;top:136px;color:#fff;width:65px;overflow:hidden">dvojka</div>
<div class="t" style="left:945px;top:136px;color:#fff;width:49px;overflow:hidden">2</div>
<div class="t r" style="left:994px;width:52px;top:136px;color:#fff">2</div>
<div class="a" style="left:13px;top:151px;width:1035px;height:15px;background:#e0f3ff"></div>
<div class="hl" style="left:13px;top:166px;width:1035px"></div>
<div class="t" style="left:81px;top:152px;color:#000;width:64px;overflow:hidden">Cupal</div>
<div class="t" style="left:147px;top:152px;color:#000;width:58px;overflow:hidden">Miroslav</div>
<div class="t r" style="left:205px;width:48px;top:152px;color:#000">10</div>
<div class="t" style="left:257px;top:152px;color:#000;width:36px;overflow:hidden">11330</div>
<div class="t" style="left:295px;top:152px;color:#000;width:40px;overflow:hidden">250X3</div>
<div class="t" style="left:337px;top:152px;color:#000;width:181px;overflow:hidden">svářeč</div>
<div class="cb" style="left:643px;top:152px"><i></i></div>
<div class="cb" style="left:715px;top:152px"><i></i></div>
<div class="t" style="left:878px;top:152px;color:#000;width:65px;overflow:hidden">dvojka</div>
<div class="t" style="left:945px;top:152px;color:#000;width:49px;overflow:hidden">2</div>
<div class="t r" style="left:994px;width:52px;top:152px;color:#000">2</div>
<div class="a" style="left:13px;top:167px;width:1035px;height:15px;background:#e9f9a9"></div>
<div class="hl" style="left:13px;top:182px;width:1035px"></div>
<div class="t" style="left:81px;top:168px;color:#000;width:64px;overflow:hidden">Druhá</div>
<div class="t" style="left:147px;top:168px;color:#000;width:58px;overflow:hidden">Ivana</div>
<div class="t r" style="left:205px;width:48px;top:168px;color:#000">2</div>
<div class="t" style="left:257px;top:168px;color:#000;width:36px;overflow:hidden">11190</div>
<div class="t" style="left:295px;top:168px;color:#000;width:40px;overflow:hidden">801S0</div>
<div class="t" style="left:337px;top:168px;color:#000;width:181px;overflow:hidden">manager TOP - ředitel úseku správy</div>
<div class="t" style="left:520px;top:168px;color:#000;width:79px;overflow:hidden">04.01.2013</div>
<div class="cb" style="left:643px;top:168px"><i></i></div>
<svg class="a" style="left:643px;top:168px" width="13" height="13"><path d="M3.5 6.5 L5.5 10 L10 2.5" fill="none" stroke="#2c4a9c" stroke-width="1.8"/></svg>
<div class="cb" style="left:715px;top:168px"><i></i></div>
<div class="t r" style="left:743px;width:66px;top:168px;color:#000">27</div>
<div class="t r" style="left:811px;width:63px;top:168px;color:#000">29</div>
<div class="t" style="left:878px;top:168px;color:#000;width:65px;overflow:hidden">Hladík</div>
<div class="t" style="left:945px;top:168px;color:#000;width:49px;overflow:hidden">Hynek</div>
<div class="t r" style="left:994px;width:52px;top:168px;color:#000">337</div>
<div class="a" style="left:13px;top:183px;width:1035px;height:15px;background:#e9f9a9"></div>
<div class="hl" style="left:13px;top:198px;width:1035px"></div>
<div class="t" style="left:81px;top:184px;color:#000;width:64px;overflow:hidden">Druhá</div>
<div class="t" style="left:147px;top:184px;color:#000;width:58px;overflow:hidden">Ivana</div>
<div class="t r" style="left:205px;width:48px;top:184px;color:#000">2</div>
<div class="t" style="left:257px;top:184px;color:#000;width:36px;overflow:hidden">11190</div>
<div class="t" style="left:295px;top:184px;color:#000;width:40px;overflow:hidden">801S0</div>
<div class="t" style="left:337px;top:184px;color:#000;width:181px;overflow:hidden">manager TOP - ředitel úseku správy</div>
<div class="t" style="left:520px;top:184px;color:#000;width:79px;overflow:hidden">04.01.2013</div>
<div class="cb" style="left:643px;top:184px"><i></i></div>
<div class="cb" style="left:715px;top:184px"><i></i></div>
<div class="t r" style="left:743px;width:66px;top:184px;color:#000">27</div>
<div class="t r" style="left:811px;width:63px;top:184px;color:#000">29</div>
<div class="t" style="left:878px;top:184px;color:#000;width:65px;overflow:hidden">Forejtová</div>
<div class="t" style="left:945px;top:184px;color:#000;width:49px;overflow:hidden">Jana</div>
<div class="t r" style="left:994px;width:52px;top:184px;color:#000">3</div>
<div class="a" style="left:13px;top:199px;width:1035px;height:15px;background:#e0f3ff"></div>
<div class="hl" style="left:13px;top:214px;width:1035px"></div>
<div class="t" style="left:81px;top:200px;color:#000;width:64px;overflow:hidden">Gruntová</div>
<div class="t" style="left:147px;top:200px;color:#000;width:58px;overflow:hidden">Marie</div>
<div class="t r" style="left:205px;width:48px;top:200px;color:#000">262</div>
<div class="t" style="left:257px;top:200px;color:#000;width:36px;overflow:hidden">11320</div>
<div class="t" style="left:295px;top:200px;color:#000;width:40px;overflow:hidden">175X1</div>
<div class="t" style="left:337px;top:200px;color:#000;width:181px;overflow:hidden">oplatkář</div>
<div class="cb" style="left:643px;top:200px"><i></i></div>
<div class="cb" style="left:715px;top:200px"><i></i></div>
<div class="t" style="left:878px;top:200px;color:#000;width:65px;overflow:hidden">dvojka</div>
<div class="t" style="left:945px;top:200px;color:#000;width:49px;overflow:hidden">2</div>
<div class="t r" style="left:994px;width:52px;top:200px;color:#000">2</div>
<div class="a" style="left:13px;top:215px;width:1035px;height:15px;background:#ffebc4"></div>
<div class="hl" style="left:13px;top:230px;width:1035px"></div>
<div class="t" style="left:81px;top:216px;color:#000;width:64px;overflow:hidden">Haluz</div>
<div class="t" style="left:147px;top:216px;color:#000;width:58px;overflow:hidden">Lech</div>
<div class="t r" style="left:205px;width:48px;top:216px;color:#000">813</div>
<div class="t" style="left:257px;top:216px;color:#000;width:36px;overflow:hidden">11820</div>
<div class="cb" style="left:643px;top:216px"><i></i></div>
<div class="cb" style="left:715px;top:216px"><i></i></div>
<div class="t" style="left:878px;top:216px;color:#000;width:65px;overflow:hidden">dvojka</div>
<div class="t" style="left:945px;top:216px;color:#000;width:49px;overflow:hidden">2</div>
<div class="t r" style="left:994px;width:52px;top:216px;color:#000">2</div>
<div class="a" style="left:13px;top:231px;width:1035px;height:15px;background:#e0f3ff"></div>
<div class="hl" style="left:13px;top:246px;width:1035px"></div>
<div class="t" style="left:81px;top:232px;color:#000;width:64px;overflow:hidden">Chalupa</div>
<div class="t" style="left:147px;top:232px;color:#000;width:58px;overflow:hidden">Jiří</div>
<div class="t r" style="left:205px;width:48px;top:232px;color:#000">682</div>
<div class="t" style="left:257px;top:232px;color:#000;width:36px;overflow:hidden">11210</div>
<div class="t" style="left:295px;top:232px;color:#000;width:40px;overflow:hidden">591X1</div>
<div class="t" style="left:337px;top:232px;color:#000;width:181px;overflow:hidden">obchodní referent</div>
<div class="cb" style="left:643px;top:232px"><i></i></div>
<div class="cb" style="left:715px;top:232px"><i></i></div>
<div class="t" style="left:878px;top:232px;color:#000;width:65px;overflow:hidden">dvojka</div>
<div class="t" style="left:945px;top:232px;color:#000;width:49px;overflow:hidden">2</div>
<div class="t r" style="left:994px;width:52px;top:232px;color:#000">2</div>
<div class="a" style="left:13px;top:247px;width:1035px;height:15px;background:#ffebc4"></div>
<div class="hl" style="left:13px;top:262px;width:1035px"></div>
<div class="t" style="left:81px;top:248px;color:#000;width:64px;overflow:hidden">Janoušková</div>
<div class="t" style="left:147px;top:248px;color:#000;width:58px;overflow:hidden">Libuše</div>
<div class="t r" style="left:205px;width:48px;top:248px;color:#000">620</div>
<div class="t" style="left:257px;top:248px;color:#000;width:36px;overflow:hidden">11330</div>
<div class="t" style="left:295px;top:248px;color:#000;width:40px;overflow:hidden">174X1</div>
<div class="t" style="left:337px;top:248px;color:#000;width:181px;overflow:hidden">knedlikář</div>
<div class="cb" style="left:643px;top:248px"><i></i></div>
<div class="cb" style="left:715px;top:248px"><i></i></div>
<div class="t" style="left:878px;top:248px;color:#000;width:65px;overflow:hidden">dvojka</div>
<div class="t" style="left:945px;top:248px;color:#000;width:49px;overflow:hidden">2</div>
<div class="t r" style="left:994px;width:52px;top:248px;color:#000">2</div>
<div class="a" style="left:13px;top:263px;width:1035px;height:15px;background:#e0f3ff"></div>
<div class="hl" style="left:13px;top:278px;width:1035px"></div>
<div class="t" style="left:81px;top:264px;color:#000;width:64px;overflow:hidden">Kedronová</div>
<div class="t" style="left:147px;top:264px;color:#000;width:58px;overflow:hidden">Růžena</div>
<div class="t r" style="left:205px;width:48px;top:264px;color:#000">255</div>
<div class="t" style="left:257px;top:264px;color:#000;width:36px;overflow:hidden">11430</div>
<div class="t" style="left:295px;top:264px;color:#000;width:40px;overflow:hidden">220X3</div>
<div class="t" style="left:337px;top:264px;color:#000;width:181px;overflow:hidden">skladník</div>
<div class="cb" style="left:643px;top:264px"><i></i></div>
<div class="cb" style="left:715px;top:264px"><i></i></div>
<div class="t" style="left:878px;top:264px;color:#000;width:65px;overflow:hidden">dvojka</div>
<div class="t" style="left:945px;top:264px;color:#000;width:49px;overflow:hidden">2</div>
<div class="t r" style="left:994px;width:52px;top:264px;color:#000">2</div>
<div class="a" style="left:13px;top:279px;width:1035px;height:15px;background:#ffebc4"></div>
<div class="hl" style="left:13px;top:294px;width:1035px"></div>
<div class="t" style="left:81px;top:280px;color:#000;width:64px;overflow:hidden">Krautig</div>
<div class="t" style="left:147px;top:280px;color:#000;width:58px;overflow:hidden">Kurt</div>
<div class="t r" style="left:205px;width:48px;top:280px;color:#000">901</div>
<div class="t" style="left:257px;top:280px;color:#000;width:36px;overflow:hidden">11410</div>
<div class="t" style="left:295px;top:280px;color:#000;width:40px;overflow:hidden">802N0</div>
<div class="t" style="left:337px;top:280px;color:#000;width:181px;overflow:hidden">manager - vedoucí Nákupu</div>
<div class="cb" style="left:643px;top:280px"><i></i></div>
<div class="cb" style="left:715px;top:280px"><i></i></div>
<div class="t" style="left:878px;top:280px;color:#000;width:65px;overflow:hidden">dvojka</div>
<div class="t" style="left:945px;top:280px;color:#000;width:49px;overflow:hidden">2</div>
<div class="t r" style="left:994px;width:52px;top:280px;color:#000">2</div>
<div class="a" style="left:13px;top:295px;width:1035px;height:15px;background:#ffebc4"></div>
<div class="hl" style="left:13px;top:310px;width:1035px"></div>
<div class="t" style="left:81px;top:296px;color:#000;width:64px;overflow:hidden">Lasica</div>
<div class="t" style="left:147px;top:296px;color:#000;width:58px;overflow:hidden">Adrián</div>
<div class="t r" style="left:205px;width:48px;top:296px;color:#000">903</div>
<div class="t" style="left:257px;top:296px;color:#000;width:36px;overflow:hidden">11710</div>
<div class="t" style="left:295px;top:296px;color:#000;width:40px;overflow:hidden">802U0</div>
<div class="t" style="left:337px;top:296px;color:#000;width:181px;overflow:hidden">manager - vedoucí Údržby</div>
<div class="cb" style="left:643px;top:296px"><i></i></div>
<div class="cb" style="left:715px;top:296px"><i></i></div>
<div class="t" style="left:878px;top:296px;color:#000;width:65px;overflow:hidden">dvojka</div>
<div class="t" style="left:945px;top:296px;color:#000;width:49px;overflow:hidden">2</div>
<div class="t r" style="left:994px;width:52px;top:296px;color:#000">2</div>
<div class="a" style="left:13px;top:311px;width:1035px;height:15px;background:#e9f9a9"></div>
<div class="hl" style="left:13px;top:326px;width:1035px"></div>
<div class="t" style="left:81px;top:312px;color:#000;width:64px;overflow:hidden">Mudrayová</div>
<div class="t" style="left:147px;top:312px;color:#000;width:58px;overflow:hidden">Vlasta</div>
<div class="t r" style="left:205px;width:48px;top:312px;color:#000">618</div>
<div class="t" style="left:257px;top:312px;color:#000;width:36px;overflow:hidden">11610</div>
<div class="t" style="left:295px;top:312px;color:#000;width:40px;overflow:hidden">690X3</div>
<div class="t" style="left:337px;top:312px;color:#000;width:181px;overflow:hidden">referent úseku služeb</div>
<div class="t" style="left:520px;top:312px;color:#000;width:79px;overflow:hidden">04.01.2013</div>
<div class="cb" style="left:643px;top:312px"><i></i></div>
<div class="cb" style="left:715px;top:312px"><i></i></div>
<div class="t r" style="left:743px;width:66px;top:312px;color:#000">32</div>
<div class="t r" style="left:811px;width:63px;top:312px;color:#000">183</div>
<div class="t" style="left:878px;top:312px;color:#000;width:65px;overflow:hidden">dvojka</div>
<div class="t" style="left:945px;top:312px;color:#000;width:49px;overflow:hidden">2</div>
<div class="t r" style="left:994px;width:52px;top:312px;color:#000">2</div>
<div class="a" style="left:13px;top:327px;width:1035px;height:15px;background:#e9f9a9"></div>
<div class="hl" style="left:13px;top:342px;width:1035px"></div>
<div class="t" style="left:81px;top:328px;color:#000;width:64px;overflow:hidden">Nováková</div>
<div class="t" style="left:147px;top:328px;color:#000;width:58px;overflow:hidden">Marie</div>
<div class="t r" style="left:205px;width:48px;top:328px;color:#000">681</div>
<div class="t" style="left:257px;top:328px;color:#000;width:36px;overflow:hidden">11210</div>
<div class="t" style="left:295px;top:328px;color:#000;width:40px;overflow:hidden">590X3</div>
<div class="t" style="left:337px;top:328px;color:#000;width:181px;overflow:hidden">referent prodeje</div>
<div class="t" style="left:520px;top:328px;color:#000;width:79px;overflow:hidden">04.01.2013</div>
<div class="cb" style="left:643px;top:328px"><i></i></div>
<div class="cb" style="left:715px;top:328px"><i></i></div>
<div class="t r" style="left:743px;width:66px;top:328px;color:#000">13</div>
<div class="t r" style="left:811px;width:63px;top:328px;color:#000">30</div>
<div class="t" style="left:878px;top:328px;color:#000;width:65px;overflow:hidden">dvojka</div>
<div class="t" style="left:945px;top:328px;color:#000;width:49px;overflow:hidden">2</div>
<div class="t r" style="left:994px;width:52px;top:328px;color:#000">2</div>
<div class="a" style="left:13px;top:343px;width:1035px;height:15px;background:#ffebc4"></div>
<div class="hl" style="left:13px;top:358px;width:1035px"></div>
<div class="t" style="left:81px;top:344px;color:#000;width:64px;overflow:hidden">Opitz</div>
<div class="t" style="left:147px;top:344px;color:#000;width:58px;overflow:hidden">Jan</div>
<div class="t r" style="left:205px;width:48px;top:344px;color:#000">900</div>
<div class="t" style="left:257px;top:344px;color:#000;width:36px;overflow:hidden">11400</div>
<div class="cb" style="left:643px;top:344px"><i></i></div>
<div class="cb" style="left:715px;top:344px"><i></i></div>
<div class="t" style="left:878px;top:344px;color:#000;width:65px;overflow:hidden">dvojka</div>
<div class="t" style="left:945px;top:344px;color:#000;width:49px;overflow:hidden">2</div>
<div class="t r" style="left:994px;width:52px;top:344px;color:#000">2</div>
<div class="a" style="left:13px;top:359px;width:1035px;height:15px;background:#ffebc4"></div>
<div class="hl" style="left:13px;top:374px;width:1035px"></div>
<div class="t" style="left:81px;top:360px;color:#000;width:64px;overflow:hidden">Švambergová</div>
<div class="t" style="left:147px;top:360px;color:#000;width:58px;overflow:hidden">Milena</div>
<div class="t r" style="left:205px;width:48px;top:360px;color:#000">394</div>
<div class="t" style="left:257px;top:360px;color:#000;width:36px;overflow:hidden">11330</div>
<div class="t" style="left:295px;top:360px;color:#000;width:40px;overflow:hidden">174X1</div>
<div class="t" style="left:337px;top:360px;color:#000;width:181px;overflow:hidden">knedlikář</div>
<div class="cb" style="left:643px;top:360px"><i></i></div>
<div class="cb" style="left:715px;top:360px"><i></i></div>
<div class="t" style="left:878px;top:360px;color:#000;width:65px;overflow:hidden">dvojka</div>
<div class="t" style="left:945px;top:360px;color:#000;width:49px;overflow:hidden">2</div>
<div class="t r" style="left:994px;width:52px;top:360px;color:#000">2</div>
<div class="a" style="left:13px;top:375px;width:1035px;height:15px;background:#ffebc4"></div>
<div class="hl" style="left:13px;top:390px;width:1035px"></div>
<div class="t" style="left:81px;top:376px;color:#000;width:64px;overflow:hidden">Truhlář</div>
<div class="t" style="left:147px;top:376px;color:#000;width:58px;overflow:hidden">Václav</div>
<div class="t r" style="left:205px;width:48px;top:376px;color:#000">54</div>
<div class="t" style="left:257px;top:376px;color:#000;width:36px;overflow:hidden">11820</div>
<div class="t" style="left:295px;top:376px;color:#000;width:40px;overflow:hidden">632X1</div>
<div class="t" style="left:337px;top:376px;color:#000;width:181px;overflow:hidden">referent dopravy externí</div>
<div class="cb" style="left:643px;top:376px"><i></i></div>
<div class="cb" style="left:715px;top:376px"><i></i></div>
<div class="t" style="left:878px;top:376px;color:#000;width:65px;overflow:hidden">dvojka</div>
<div class="t" style="left:945px;top:376px;color:#000;width:49px;overflow:hidden">2</div>
<div class="t r" style="left:994px;width:52px;top:376px;color:#000">2</div>
<div class="vl" style="left:79px;top:119px;height:272px"></div>
<div class="vl" style="left:145px;top:119px;height:272px"></div>
<div class="vl" style="left:205px;top:119px;height:272px"></div>
<div class="vl" style="left:255px;top:119px;height:272px"></div>
<div class="vl" style="left:293px;top:119px;height:272px"></div>
<div class="vl" style="left:335px;top:119px;height:272px"></div>
<div class="vl" style="left:518px;top:119px;height:272px"></div>
<div class="vl" style="left:599px;top:119px;height:272px"></div>
<div class="vl" style="left:698px;top:119px;height:272px"></div>
<div class="vl" style="left:743px;top:119px;height:272px"></div>
<div class="vl" style="left:811px;top:119px;height:272px"></div>
<div class="vl" style="left:876px;top:119px;height:272px"></div>
<div class="vl" style="left:943px;top:119px;height:272px"></div>
<div class="vl" style="left:994px;top:119px;height:272px"></div>
<div class="vl" style="left:1048px;top:55px;height:523px"></div>
<div class="a" style="left:1049px;top:54px;width:17px;height:524px;background:#f0f0f0;border-left:1px solid #fbfbfb"></div>
<svg class="a" style="left:0;top:0;z-index:2" width="1076" height="583">
<defs><linearGradient id="ag" x1="0" y1="0" x2="1" y2="1"><stop offset="0" stop-color="#1a1a1a"/><stop offset="1" stop-color="#9a9a9a"/></linearGradient></defs>
<path d="M1054.8 65.2 L1058.6 61 L1062.4 65.2Z" fill="url(#ag)"/>
<path d="M1054.8 567.8 L1062.4 567.8 L1058.6 572Z" fill="url(#ag)"/>
<path d="M23.2 564.8 L23.2 572.4 L19 568.6Z" fill="url(#ag)"/>
<path d="M1038 564.8 L1038 572.4 L1042.2 568.6Z" fill="url(#ag)"/>
</svg>
<div class="a" style="left:1050px;top:313px;width:15px;height:6px;border:1px solid #8f8f8f;border-radius:2px;background:linear-gradient(90deg,#fafafa,#e8e8e8 50%,#d0d0d0)"></div>
<div class="hl" style="left:13px;top:560px;width:1035px;background:#fafafa"></div>
<div class="a" style="left:13px;top:561px;width:1035px;height:16px;background:#ececec"></div>
<div class="a" style="left:31px;top:561px;width:998px;height:15px;border:1px solid #979797;border-radius:2px;background:linear-gradient(#f7f7f7,#eaeaea 45%,#d8d8d8 50%,#cfcfcf)"></div>
<div class="a" style="left:527px;top:565px;width:2px;height:7px;background:linear-gradient(#222,#8a8a8a);border-right:0.5px solid #fff"></div>
<div class="a" style="left:530px;top:565px;width:2px;height:7px;background:linear-gradient(#222,#8a8a8a);border-right:0.5px solid #fff"></div>
<div class="a" style="left:533px;top:565px;width:2px;height:7px;background:linear-gradient(#222,#8a8a8a);border-right:0.5px solid #fff"></div>
<div class="hl" style="left:12px;top:577px;width:1037px;background:#858d97"></div>
</body></html>
